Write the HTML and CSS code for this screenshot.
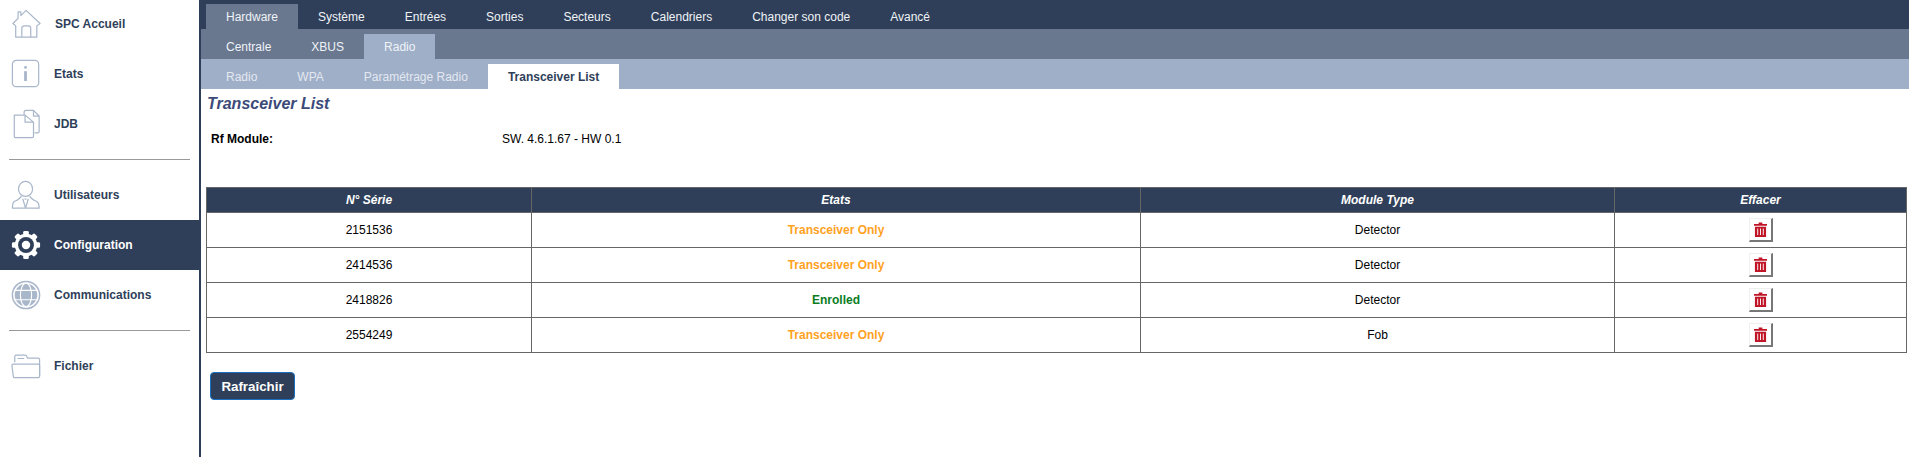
FILE: index.html
```html
<!DOCTYPE html>
<html lang="fr">
<head>
<meta charset="utf-8">
<title>Transceiver List</title>
<link rel="stylesheet" href="styles.css">
</head>
<body>
<div class="app">
  <aside class="sidebar">
    <nav class="group group-top">
      <a class="item"><svg class="ico ico-home" viewBox="0 0 32 32"><path d="M1.500 15.500 L7 10 V3 H10 V7 L15.500 1.500 L30.500 15.500 L27 18 V30 H4.500 V18 Z M11 30 V20.500 Q11 18 13.500 18 H18 Q20.500 18 20.500 20.500 V30"/></svg><span class="label">SPC Accueil</span></a>
      <a class="item"><svg class="ico" viewBox="0 0 32 32"><rect x="1.500" y="1.500" width="28" height="28" rx="4"/><circle class="fill" cx="15.500" cy="9" r="1.500"/><rect class="fill" x="14" y="13" width="3" height="10.500"/></svg><span class="label">Etats</span></a>
      <a class="item"><svg class="ico" viewBox="0 0 32 32"><path d="M14 6 V3.500 Q14 1.500 16 1.500 H24 L30 7.500 V24 Q30 25.500 28.500 25.500 H25 M24 1.500 V7.500 H30"/><path d="M3.500 6.500 H15 L24 14 V29 Q24 30.500 22.500 30.500 H5 Q3.500 30.500 3.500 29 Z M15 6.500 V14 H24"/></svg><span class="label">JDB</span></a>
    </nav>
    <hr class="rule rule-one">
    <nav class="group">
      <a class="item"><svg class="ico" viewBox="0 0 32 32"><ellipse cx="15.500" cy="9.500" rx="7.500" ry="8"/><path d="M11 17 Q10 20 3.500 23 Q1.500 24.500 1.500 30 H30 Q30 24.500 27.500 23 Q21 20 20 17 M12.500 20 L15.500 30 L18.500 20 M14.500 20.500 H16.500"/></svg><span class="label">Utilisateurs</span></a>
      <a class="item active"><svg class="ico" viewBox="0 0 32 32"><g class="teeth"><rect x="13" y="1" width="6" height="6" rx="1.500"/><rect x="13" y="1" width="6" height="6" rx="1.500" transform="rotate(45 16 16)"/><rect x="13" y="1" width="6" height="6" rx="1.500" transform="rotate(90 16 16)"/><rect x="13" y="1" width="6" height="6" rx="1.500" transform="rotate(135 16 16)"/><rect x="13" y="1" width="6" height="6" rx="1.500" transform="rotate(180 16 16)"/><rect x="13" y="1" width="6" height="6" rx="1.500" transform="rotate(225 16 16)"/><rect x="13" y="1" width="6" height="6" rx="1.500" transform="rotate(270 16 16)"/><rect x="13" y="1" width="6" height="6" rx="1.500" transform="rotate(315 16 16)"/></g><circle class="gear" cx="16" cy="16" r="12"/><circle class="ring" cx="16" cy="16" r="8.500"/><circle class="gear" cx="16" cy="16" r="4.500"/></svg><span class="label">Configuration</span></a>
      <a class="item"><svg class="ico" viewBox="0 0 32 32"><circle class="thick" cx="16" cy="16" r="14.500"/><circle class="fill" cx="16" cy="16" r="12"/><g class="grid-lines"><ellipse cx="16" cy="16" rx="6" ry="12.500"/><path d="M3 11 H29 M3 21 H29"/></g></svg><span class="label">Communications</span></a>
    </nav>
    <hr class="rule rule-two">
    <nav class="group">
      <a class="item"><svg class="ico" viewBox="0 0 32 26"><path d="M4 9 V3 Q4 1.500 5.500 1.500 H15 Q16.500 1.500 17 3 L17.500 4.500 H29 Q30.500 4.500 30.500 6 V24"/><path d="M1 12.500 Q1 11 2.500 11 H29 Q30.500 11 30.500 12.500 V24 Q30.500 25.500 29 25.500 H4 Q2.500 25.500 2.500 24 Z M7 5 H14"/></svg><span class="label">Fichier</span></a>
    </nav>
  </aside>
  <main class="main">
    <div class="tabs tabs-one">
      <a class="tab on">Hardware</a><a class="tab">Système</a><a class="tab">Entrées</a><a class="tab">Sorties</a><a class="tab">Secteurs</a><a class="tab">Calendriers</a><a class="tab">Changer son code</a><a class="tab">Avancé</a>
    </div>
    <div class="tabs tabs-two">
      <a class="tab">Centrale</a><a class="tab">XBUS</a><a class="tab on">Radio</a>
    </div>
    <div class="tabs tabs-three">
      <a class="tab">Radio</a><a class="tab">WPA</a><a class="tab">Paramétrage Radio</a><a class="tab on">Transceiver List</a>
    </div>
    <section class="content">
      <h1 class="title">Transceiver List</h1>
      <div class="info"><span class="info-key">Rf Module:</span><span>SW. 4.6.1.67 - HW 0.1</span></div>
      <table class="list">
        <colgroup><col class="c1"><col class="c2"><col class="c3"><col class="c4"></colgroup>
        <thead><tr><th>N° Série</th><th>Etats</th><th>Module Type</th><th>Effacer</th></tr></thead>
        <tbody>
          <tr><td>2151536</td><td class="warn">Transceiver Only</td><td>Detector</td><td><button class="del" type="button"><svg class="trash" viewBox="0 0 14 16"><path d="M5 0.500 H9 V2 H14 V4 H0 V2 H5 Z M1 5 H13 V16 H1 Z"/><path class="slots" d="M4 7 V14 M7 7 V14 M10 7 V14"/></svg></button></td></tr>
          <tr><td>2414536</td><td class="warn">Transceiver Only</td><td>Detector</td><td><button class="del" type="button"><svg class="trash" viewBox="0 0 14 16"><path d="M5 0.500 H9 V2 H14 V4 H0 V2 H5 Z M1 5 H13 V16 H1 Z"/><path class="slots" d="M4 7 V14 M7 7 V14 M10 7 V14"/></svg></button></td></tr>
          <tr><td>2418826</td><td class="ok">Enrolled</td><td>Detector</td><td><button class="del" type="button"><svg class="trash" viewBox="0 0 14 16"><path d="M5 0.500 H9 V2 H14 V4 H0 V2 H5 Z M1 5 H13 V16 H1 Z"/><path class="slots" d="M4 7 V14 M7 7 V14 M10 7 V14"/></svg></button></td></tr>
          <tr><td>2554249</td><td class="warn">Transceiver Only</td><td>Fob</td><td><button class="del" type="button"><svg class="trash" viewBox="0 0 14 16"><path d="M5 0.500 H9 V2 H14 V4 H0 V2 H5 Z M1 5 H13 V16 H1 Z"/><path class="slots" d="M4 7 V14 M7 7 V14 M10 7 V14"/></svg></button></td></tr>
        </tbody>
      </table>
      <button class="refresh" type="button">Rafraîchir</button>
    </section>
  </main>
</div>
</body>
</html>
```
FILE: styles.css
```css
* { box-sizing: border-box; }
html, body { margin: 0; height: 100%; background: #fff; overflow: hidden; }
body { font-family: "Liberation Sans", Arial, sans-serif; font-size: 12px; color: #000; }
.app { display: flex; height: 457px; }

.sidebar { width: 201px; flex: none; border-right: 2px solid #2f3f59; background: #fff; }
.group-top { margin-top: -1px; }
.item { display: flex; align-items: center; height: 50px; gap: 13px; padding-left: 11px; color: #2f3f59; font-weight: bold; }
.label { white-space: nowrap; }
.ico { width: 30px; height: 30px; flex: none; fill: none; stroke: #a9b7cb; stroke-width: 1.300; stroke-linejoin: round; }
.ico-home { width: 31px; }
.ico .fill { fill: #a9b7cb; stroke: none; }
.ico .thick { stroke-width: 1.600; }
.ico .grid-lines { stroke: #fff; stroke-width: 1.200; }
.rule { height: 1px; margin: 0 9px; border: 0; background: #999; }
.rule-one { margin-top: 10px; margin-bottom: 10px; }
.rule-two { margin-top: 10px; margin-bottom: 10px; }
.item.active { background: #2f3f59; color: #fff; margin-right: -2px; position: relative; }
.active .ico { stroke: none; fill: #fff; }
.active .ring { fill: #2f3f59; }

.main { flex: 1; min-width: 0; }
.tabs { display: flex; align-items: flex-end; height: 30px; padding-left: 5px; }
.tabs-one { height: 29px; background: #2f3f59; }
.tabs-two { background: #69788f; }
.tabs-three { background: #9fafc8; }
.tab { display: flex; align-items: center; justify-content: center; height: 25px; padding: 0 20px; color: #f0f3f7; white-space: nowrap; }
.tabs-one .on { background: #69788f; }
.tabs-two .on { background: #9fafc8; }
.tabs-three .tab { color: #e3e8f0; }
.tabs-three .on { background: #fff; color: #2f3f59; font-weight: bold; }

.content { padding: 0 3px 0 5px; }
.title { margin: 6px 0 0 1px; height: 18px; font-size: 16px; line-height: 18px; font-style: italic; font-weight: bold; color: #3b4a78; }
.info { display: flex; height: 14px; margin: 19px 0 0 5px; line-height: 14px; }
.info-key { width: 291px; font-weight: bold; }

.list { width: 1700px; margin-top: 41px; border-collapse: collapse; table-layout: fixed; }
.c1 { width: 325px; }
.c2 { width: 609px; }
.c3 { width: 474px; }
.c4 { width: 292px; }
.list th, .list td { padding: 0; border: 1px solid #666; text-align: center; }
.list th { height: 25px; background: #2f3f59; color: #fff; font-style: italic; font-weight: bold; }
.list td { height: 35px; }
.warn { color: #ffa21f; font-weight: bold; }
.ok { color: #0b7d1e; font-weight: bold; }
.del { display: inline-flex; align-items: center; justify-content: center; width: 24px; height: 24px; padding: 0; vertical-align: middle; background: #fff; border-style: solid; border-width: 1px 2px 2px 1px; border-color: #efefef #777 #777 #efefef; }
.trash { width: 13px; height: 15px; fill: #c01526; }
.slots { fill: none; stroke: #fff; stroke-width: 1; }

.refresh { display: block; width: 85px; height: 28px; margin: 19px 0 0 4px; padding: 0; background: #2f3f59; border: 1px solid #1a6fc0; border-radius: 4px; color: #fff; font: bold 13.330px "Liberation Sans", Arial, sans-serif; }
```
